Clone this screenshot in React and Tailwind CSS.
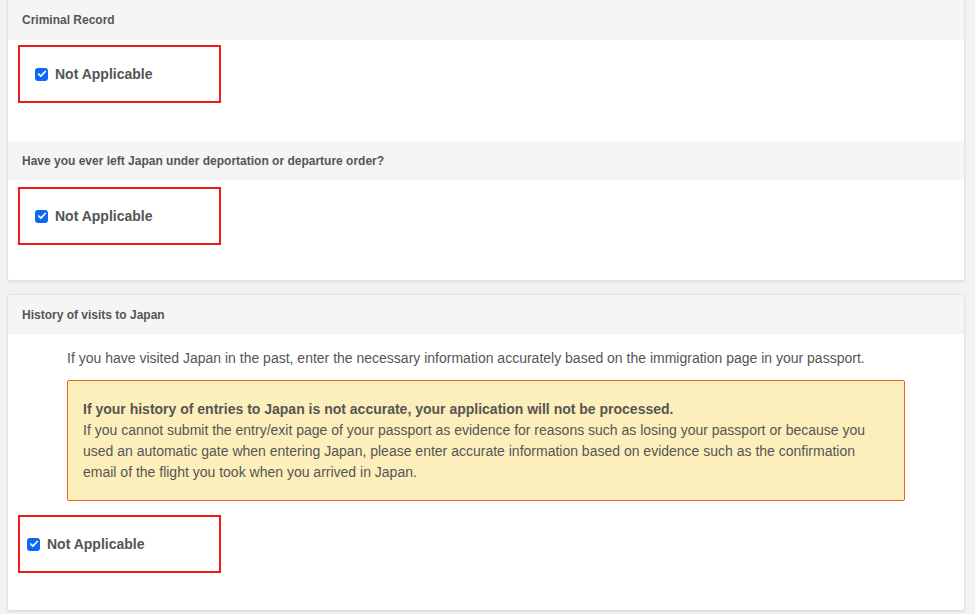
import { Check } from 'lucide-react'

function CheckRow({ inset = 'pl-[15px]' }) {
  return (
    <div className={`flex h-[58px] w-[203px] items-center border-2 border-[#f01c1c] ${inset}`}>
      <span className="flex h-[13px] w-[13px] items-center justify-center rounded-[3px] bg-[#0f68f5]">
        <Check size={10} strokeWidth={4} className="text-white" />
      </span>
      <span className="ml-[7px] text-[14px] font-bold text-[#555]">Not Applicable</span>
    </div>
  )
}

function SectionHeader({ children, tall }) {
  return (
    <div
      className={`flex items-center bg-[#f5f5f5] px-[14px] text-[12px] font-bold text-[#555] ${tall ? 'h-[40px]' : 'h-[39px]'}`}
    >
      {children}
    </div>
  )
}

export default function App() {
  return (
    <main
      className="min-h-screen bg-[#f1f2f4] pl-[7px] pr-[10px]"
      style={{ fontFamily: '"Liberation Sans", Arial, sans-serif' }}
    >
      <section className="-mt-px overflow-hidden rounded-b-[3px] border border-[#e2e3e5] bg-white shadow-[0_1px_2px_rgba(0,0,0,0.08)]">
        <SectionHeader tall>Criminal Record</SectionHeader>
        <div className="h-[101px] px-[10px] pt-[5px]">
          <CheckRow />
        </div>
        <SectionHeader>Have you ever left Japan under deportation or departure order?</SectionHeader>
        <div className="h-[100px] px-[10px] pt-[7px]">
          <CheckRow />
        </div>
      </section>

      <section className="mt-[13px] overflow-hidden rounded-[3px] border border-[#e2e3e5] bg-white shadow-[0_1px_2px_rgba(0,0,0,0.08)]">
        <SectionHeader>History of visits to Japan</SectionHeader>
        <div className="px-[10px] pb-[37px] pt-[14px]">
          <div className="px-[49px] text-[14px] leading-[21px] text-[#555]">
            <p>
              If you have visited Japan in the past, enter the necessary information accurately based on the
              immigration page in your passport.
            </p>
            <div className="mt-[11px] rounded-[2px] border border-[#e5661f] bg-[#fdefbc] px-[15px] pb-[17px] pt-[18px]">
              <p className="font-bold">
                If your history of entries to Japan is not accurate, your application will not be processed.
              </p>
              <p>
                If you cannot submit the entry/exit page of your passport as evidence for reasons such as losing
                your passport or because you used an automatic gate when entering Japan, please enter accurate
                information based on evidence such as the confirmation email of the flight you took when you
                arrived in Japan.
              </p>
            </div>
          </div>
          <div className="mt-[14px]">
            <CheckRow inset="pl-[7px]" />
          </div>
        </div>
      </section>
    </main>
  )
}
